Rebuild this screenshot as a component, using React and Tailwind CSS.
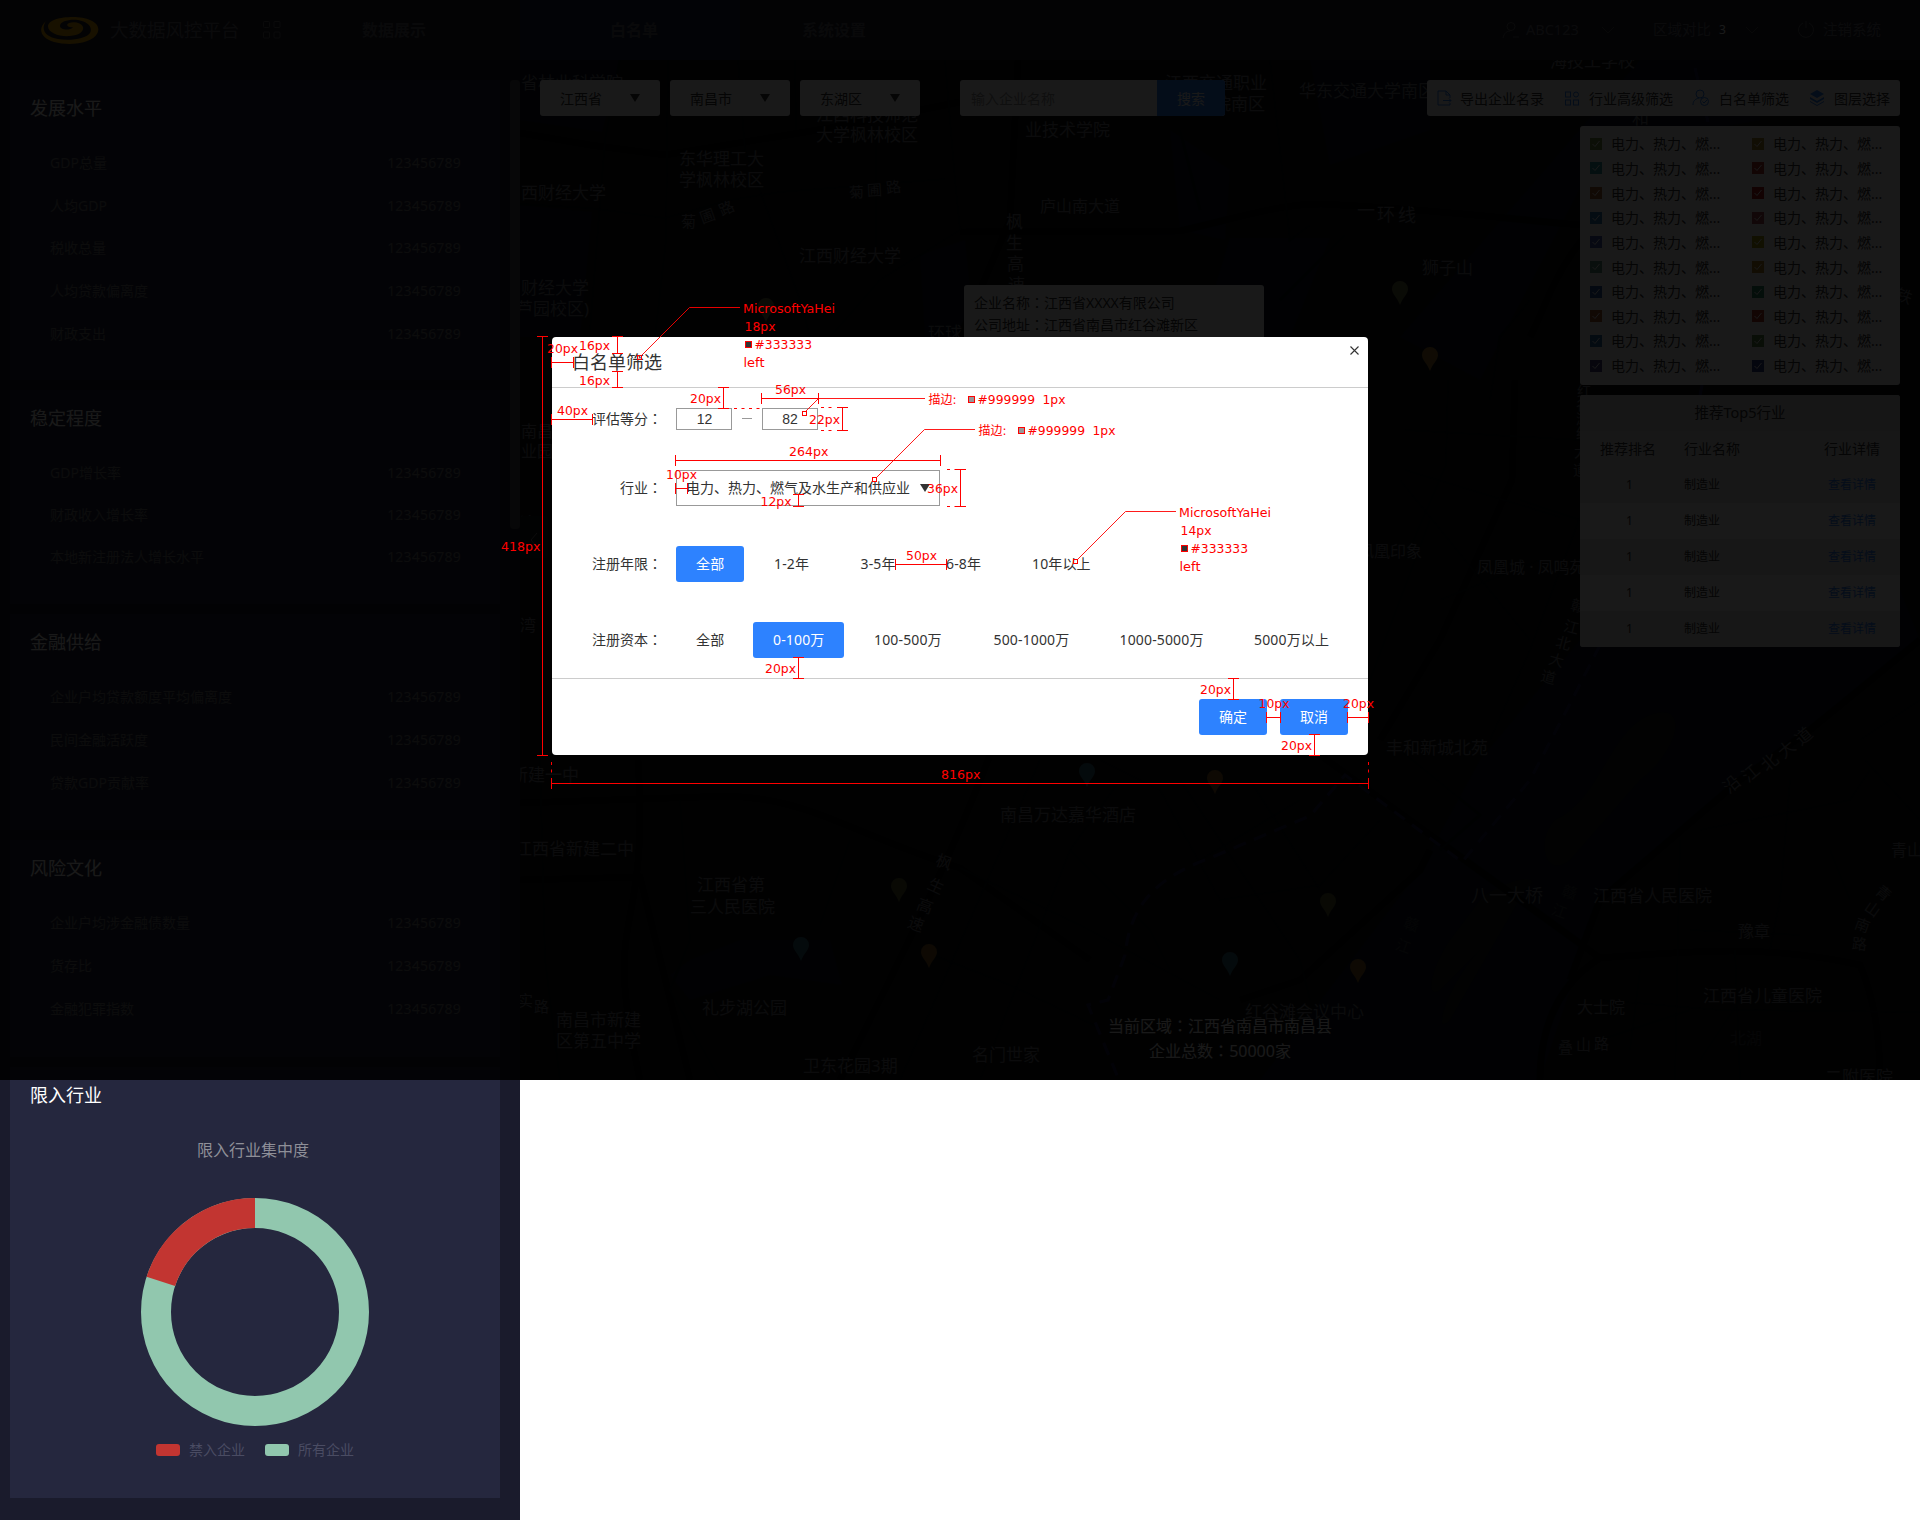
import React from "react";

const PANELS = [
  { title: "发展水平", cls: "h-[300px]", gap: "h-[42.7px]", rows: ["GDP总量", "人均GDP", "税收总量", "人均贷款偏离度", "财政支出"] },
  { title: "稳定程度", cls: "h-[214px]", gap: "h-[42px]", rows: ["GDP增长率", "财政收入增长率", "本地新注册法人增长水平"] },
  { title: "金融供给", cls: "h-[216px]", gap: "h-[43px]", rows: ["企业户均贷款额度平均偏离度", "民间金融活跃度", "贷款GDP贡献率"] },
  { title: "风险文化", cls: "h-[217px]", gap: "h-[43px]", rows: ["企业户均涉金融债数量", "货存比", "金融犯罪指数"] },
];

const LEGEND = [
  "#7f9a4b", "#b08a2e", "#2e9aa0", "#b8322f", "#b0653a", "#b3161b", "#2f78b5", "#b04a50", "#4a62b5", "#a8a012",
  "#5f9a80", "#b8821f", "#2a5aa8", "#2f8a68", "#b05a30", "#b8321f", "#2a70b0", "#5f8a4a", "#4a4088", "#2f3f90",
];

// [text, x, centre y, size, rotation]
const LABELS = [
  ["省林业科学院", 521, 83, 17], ["江西科技师范", 816, 115, 17], ["大学枫林校区", 816, 135, 17],
  ["东华理工大", 679, 159, 17], ["学枫林校区", 679, 180, 17], ["西财经大学", 521, 193, 17],
  ["财经大学", 521, 288, 17], ["芦园校区)", 516, 309, 17], ["江西财经大学", 799, 256, 17],
  ["菊", 681, 221, 15, 0], ["圃", 700, 216, 15, -20], ["路", 719, 208, 15, -25],
  ["菊", 849, 192, 15, -3], ["圃", 867, 190, 15, -3], ["路", 886, 187, 15, -8],
  ["环球", 928, 333, 17], ["庐山南大道", 1040, 206, 16],
  ["枫", 1006, 222, 17], ["生", 1006, 243, 17], ["高", 1007, 264, 17], ["速", 1008, 285, 17],
  ["江西交通职业", 1165, 83, 17], ["业技术学院", 1025, 130, 17], ["学院南区", 1197, 104, 17],
  ["华东交通大学南区", 1299, 91, 17], ["海技工学校", 1550, 61, 17], ["一", 1357, 210, 18],
  ["环", 1377, 214, 18], ["线", 1398, 215, 18], ["狮子山", 1422, 268, 17], ["和", 1632, 118, 17],
  ["南昌", 521, 431, 16], ["业园", 521, 451, 16], ["湾", 520, 523, 16], ["湾", 520, 625, 16],
  ["新建一中", 511, 775, 17], ["江西省新建二中", 515, 849, 17], ["江西省第", 697, 885, 17],
  ["三人民医院", 690, 907, 17], ["礼步湖公园", 702, 1008, 17], ["南昌市新建", 556, 1020, 17],
  ["区第五中学", 556, 1041, 17], ["实", 518, 1000, 15], ["路", 534, 1006, 15], ["卫东花园3期", 803, 1066, 17],
  ["名门世家", 972, 1055, 17], ["南昌万达嘉华酒店", 1000, 815, 17],
  ["枫", 936, 862, 16, 20], ["生", 928, 886, 16, 25], ["高", 917, 906, 16, 20], ["速", 908, 924, 16, 20],
  ["丰和新城北苑", 1386, 748, 17],
  ["沿", 1723, 784, 17, -40], ["江", 1742, 773, 17, -40], ["北", 1761, 762, 17, -40], ["大", 1778, 749, 17, -40], ["道", 1795, 736, 17, -40],
  ["青山", 1891, 850, 16], ["八一大桥", 1471, 895, 18], ["江西省人民医院", 1593, 896, 17], ["豫章", 1738, 931, 16],
  ["青", 1876, 893, 15, 40], ["山", 1865, 909, 15, 35], ["南", 1855, 925, 15, 20], ["路", 1852, 944, 15, 5],
  ["江西省儿童医院", 1703, 996, 17], ["大士院", 1577, 1007, 16], ["叠", 1558, 1047, 15], ["山", 1576, 1044, 15], ["路", 1594, 1043, 15],
  ["二附医院", 1825, 1077, 17], ["红谷滩会议中心", 1245, 1012, 17],
  ["凤凰印象", 1358, 551, 16], ["凤凰城 · 凤鸣苑", 1477, 567, 16],
  ["赣", 1571, 606, 15, 15], ["江", 1564, 627, 15, 15], ["北", 1556, 643, 15, 15], ["大", 1549, 660, 15, 15], ["道", 1541, 677, 15, 15],
  ["红", 1577, 391, 14], ["谷", 1576, 405, 14], ["滩", 1576, 419, 14], ["红", 1576, 433, 14], ["大", 1574, 452, 14], ["道", 1573, 470, 14],
  ["铁", 1896, 296, 16, 20],
];

const WATER_LABELS = [
  ["赣", 1404, 924, 15, 20], ["江", 1396, 946, 15, 20], ["赣", 1562, 892, 15, 20], ["江", 1552, 911, 15, 20], ["北湖", 1730, 1038, 16],
];

const PINS = [
  [766, 298, "#6b7340"], [1400, 281, "#6b7340"], [1430, 347, "#a0752a"], [1087, 763, "#31697a"], [1215, 770, "#8a6022"],
  [899, 878, "#59602e"], [801, 937, "#31697a"], [929, 944, "#8a6022"], [1328, 893, "#59602e"], [1230, 952, "#31697a"], [1358, 959, "#8a6022"],
];

const ROADS_WIDE = [
  "M1018 60L1010 220L960 337", "M960 232L1180 231C1250 215 1290 200 1340 205C1440 210 1520 220 1580 225",
  "M520 133L590 145L665 155L830 128L960 102", "M640 1080C600 900 650 950 638 760", "M520 803L700 797C800 790 840 830 960 868L1090 960",
  "M990 755C950 860 900 960 840 1080", "M520 880L640 877L690 1080", "M1320 755L1600 958C1700 950 1770 945 1860 965C1875 1000 1880 1040 1880 1080",
  "M1600 958C1550 990 1540 1040 1540 1080", "M1920 640L1810 730L1740 780L1600 900L1570 980", "M1515 380L1512 480L1440 640L1380 740",
  "M1240 1000L1300 980L1420 870L1430 850", "M1640 190C1560 240 1550 300 1530 337",
];
const ROADS_THIN = [
  "M620 60L605 140L590 330", "M668 60L666 240L655 337", "M738 60L745 150L800 300L810 337", "M795 60L796 130", "M520 204L590 208L665 218L730 200L780 192L945 179",
  "M876 140L876 270", "M945 60L955 180L960 230", "M830 337L880 280L960 230", "M1270 60L1290 240L1310 225", "M1180 130L1200 210",
  "M540 760L545 960L560 1080", "M680 800L690 940L670 990L720 1080", "M850 840L820 925", "M1040 760L900 1080", "M1120 780L1070 850L980 1080",
  "M960 868L1080 925L1220 1000", "M920 950L1010 985L1100 1028", "M1070 850L1150 930L1170 970", "M1180 780L1300 960L1310 1000",
  "M1200 860L1300 800", "M1250 780L1320 890", "M1100 760L1160 790L1220 900L1320 885L1380 820", "M1400 750L1480 815L1440 850",
  "M1405 470L1560 517", "M1405 430L1580 440", "M1430 520L1370 680", "M1400 480L1530 640", "M1520 500L1580 520", "M1440 600L1540 560",
  "M1448 380L1446 465L1405 560", "M1580 517L1530 650L1490 740", "M1790 780L1780 900L1770 950", "M1700 830L1850 800L1870 770", "M1690 930L1800 935",
  "M1600 1000L1720 1010L1920 1012", "M1680 840L1675 1080", "M1735 950L1740 1080", "M1830 850L1850 900", "M1530 300L1500 337L1490 400", "M1280 300L1345 235",
  "M1600 1040L1690 1010", "M1640 970L1630 1050", "M1740 1000L1700 1060", "M1865 760L1920 820", "M1860 740L1920 700",
];

const mapText = ([t, x, y, s, r], i) => (
  <text key={i} x={x} y={y + s * 0.37} fontSize={s} transform={r ? `rotate(${r} ${x + s / 2} ${y})` : undefined}>{t}</text>
);

function MapCanvas() {
  return (
    <svg className="absolute left-0 top-0" width="1400" height="1020" viewBox="520 60 1400 1020">
      <rect x="520" y="60" width="1400" height="1020" fill="#111112" />
      <g fill="#0a1120">
        <path d="M520 60H620L602 132L520 120Z" />
        <path d="M520 205L592 212L580 337H520Z" />
        <path d="M920 255L965 240L975 337H925Z" />
        <path d="M1170 130L1230 170L1225 240L1180 230Z" />
        <path d="M1310 60H1430V130L1330 165Z" />
        <path d="M1230 238H1330L1290 337H1200Z" />
        <path d="M1640 60H1760V120L1600 150L1480 380L1400 337Z" />
        <path d="M1580 640L1900 590L1920 640L1740 780L1600 900L1540 1080H1260L1420 870L1480 760Z" />
        <path d="M690 960L740 940L830 940L842 985L770 975L690 1000L670 975Z" />
      </g>
      <g fill="#141618">
        <path d="M1650 715C1690 700 1680 750 1640 780L1570 860C1545 880 1535 840 1555 820C1600 800 1610 730 1650 715Z" />
        <path d="M1480 900C1500 880 1550 870 1525 890L1450 1020C1430 1040 1450 980 1480 950L1440 990C1425 1000 1430 970 1450 940Z" />
      </g>
      <g fill="none" stroke="#050506" strokeWidth="7">
        {ROADS_WIDE.map((d) => <path key={d} d={d} />)}
      </g>
      <g fill="none" stroke="#090a0c" strokeWidth="2.5">
        {ROADS_THIN.map((d) => <path key={d} d={d} />)}
      </g>
      <g fill="none" stroke="#1c184e" strokeWidth="3" strokeDasharray="13 9">
        <path d="M1695 68L1708 122" />
        <path d="M1702 385L1690 450" />
        <path d="M1600 645L1572 700L1530 780L1462 862L1345 775L1310 816L1210 858C1150 880 1130 910 1125 955L1108 1000L1088 1005L1119 1080" />
      </g>
      <g fill="#6e7078" fontFamily="Noto Sans, Noto Sans CJK SC, sans-serif">{LABELS.map(mapText)}</g>
      <g fill="#33363e" fontFamily="Noto Sans, Noto Sans CJK SC, sans-serif">{WATER_LABELS.map(mapText)}</g>
      {PINS.map(([x, y, c]) => (
        <path key={`${x}-${y}`} fill={c} d={`M${x} ${y + 24}C${x - 3} ${y + 16} ${x - 8} ${y + 13} ${x - 8} ${y + 8}A8 8 0 0 1 ${x + 8} ${y + 8}C${x + 8} ${y + 13} ${x + 3} ${y + 16} ${x} ${y + 24}Z`} />
      ))}
      <rect x="520" y="516" width="28" height="42" rx="3" fill="#0f1715" />
      <path d="M537 533L531 540L537 547" fill="none" stroke="#777" />
    </svg>
  );
}

const Chevron = () => (
  <svg width="14" height="8" viewBox="0 0 14 8" fill="none" stroke="#555"><path d="M1 1L7 7L13 1" /></svg>
);

function Header() {
  return (
    <header className="relative flex h-[60px] w-full items-center bg-[#1e1f30] text-[#6c6c74]">
      <svg className="ml-[40px] mt-px" width="60" height="28" viewBox="0 0 60 28">
        <path fill="#f0a800" d="M6 4C-3 12 1 21 14 25C29 29 52 27 57.5 16C62 6 48 0 33 0C20 0 8 3 8 9.5C8 16 20 20 30 19C40 18 44 14 43 10C42 6 34 4 29 6C25 8 28 11 33 10C30 14 20 13 20 9C20 4 30 2 38 3C48 5 53 10 50 16C46 22 30 24 18 22C6 20 0 13 6 4Z" />
      </svg>
      <span className="ml-[10px] w-[152px] text-[18.5px] leading-none">大数据风控平台</span>
      <svg width="20" height="20" viewBox="0 0 20 20" fill="none" stroke="#666">
        <rect x="1.5" y="1.5" width="6" height="6" rx="1" /><rect x="12" y="1.5" width="6" height="6" rx="1" />
        <rect x="1.5" y="12" width="6" height="6" rx="1" /><rect x="12" y="12" width="6" height="6" rx="1" />
      </svg>
      <nav className="flex h-full items-center text-center text-[16px] font-bold text-[#5c5d66]">
        <span className="ml-[12px] w-[200px]">数据展示</span>
        <span className="ml-[26px] flex h-full w-[220px] items-center justify-center bg-[#1b2340]"><span className="pl-[8px]">白名单</span></span>
        <span className="w-[188px]">系统设置</span>
      </nav>
      <div className="absolute right-[39px] flex h-full items-center text-[14.5px]">
        <svg width="18" height="18" viewBox="0 0 18 18" fill="none" stroke="#666"><circle cx="9" cy="5.5" r="4" /><path d="M1 17C2 12 5 10 8 10M11 16H17" /></svg>
        <span className="ml-[6px] w-[75px]">ABC123</span>
        <Chevron />
        <span className="ml-[38px] w-[66px]">区域对比</span>
        <span className="w-[26px] text-[12px] text-white">3</span>
        <Chevron />
        <svg className="ml-[38px]" width="18" height="18" viewBox="0 0 18 18" fill="none" stroke="#666"><path d="M6 2A7.5 7.5 0 1 0 12 2M9 0V7" /></svg>
        <span className="ml-[8px]">注销系统</span>
      </div>
    </header>
  );
}

function Sidebar() {
  return (
    <aside className="relative flex h-[1460px] w-[520px] shrink-0 flex-col gap-[10px] bg-[#1a1b2c] pl-[10px] pt-[20px]">
      {PANELS.map((p) => (
        <section key={p.title} className={`${p.cls} w-[490px] shrink-0 bg-[#25273e]`}>
          <h2 className="flex h-[56px] items-center pl-[20px] text-[18px] text-white">{p.title}</h2>
          <div className="pl-[40px] pr-[39px] pt-[5px] text-[14px] text-[#77787f]">
            {p.rows.map((r) => (
              <div key={r} className={`${p.gap} flex items-center justify-between`}>
                <span>{r}</span><span className="tracking-[0.2px]">123456789</span>
              </div>
            ))}
          </div>
        </section>
      ))}
      <section className="flex h-[431px] w-[490px] shrink-0 flex-col bg-[#25273e]">
        <h2 className="flex h-[56px] items-center pl-[20px] text-[18px] text-white">限入行业</h2>
        <h3 className="mt-[14px] h-[26px] pr-[4px] text-center text-[16px] leading-[26px] text-[#8e8f98]">限入行业集中度</h3>
        <svg className="ml-[130px] mt-[34px] shrink-0" width="230" height="230" viewBox="-115 -115 230 230">
          <circle r="99" fill="none" stroke="#91c7ae" strokeWidth="30" />
          <path d="M0 -99A99 99 0 0 0 -94.15 -30.6" fill="none" stroke="#c23531" strokeWidth="30" />
        </svg>
        <div className="ml-[146px] mt-[13px] flex items-center text-[14px] leading-[20px] text-[#4a4c63]">
          <i className="mr-[9px] h-[12px] w-[24px] rounded-[3px] bg-[#c23531]" /><span>禁入企业</span>
          <i className="ml-[20px] mr-[9px] h-[12px] w-[24px] rounded-[3px] bg-[#91c7ae]" /><span>所有企业</span>
        </div>
      </section>
      <div className="absolute right-0 top-[20px] h-[449px] w-[10px] rounded-[4px] bg-[#4a4a50]" />
    </aside>
  );
}

const Caret = () => <svg width="10" height="8" viewBox="0 0 10 8"><path d="M0 0H10L5 8Z" fill="#333" /></svg>;

// Full-width colon, set in the middle of its square.
const Colon = () => <span className="font-['Noto_Sans_CJK_TC'] leading-none" lang="zh-TW">：</span>;

function MapControls() {
  return (
    <>
      <div className="absolute left-[20px] top-[20px] flex gap-[10px] text-[14px] text-[#333]">
        {["江西省", "南昌市", "东湖区"].map((t) => (
          <div key={t} className="flex h-[36px] w-[120px] items-center justify-between rounded-[3px] bg-white px-[20px]">{t}<Caret /></div>
        ))}
        <div className="ml-[30px] flex h-[36px] w-[265px] overflow-hidden rounded-[3px] bg-white">
          <span className="flex w-[197px] items-center pl-[11px] text-[#999]">输入企业名称</span>
          <span className="flex w-[68px] items-center justify-center bg-[#2d82ff] text-white">搜索</span>
        </div>
      </div>
      <div className="absolute right-[20px] top-[20px] flex h-[36px] w-[473px] items-center rounded-[3px] bg-white pl-[9px] text-[14px] text-[#333]">
        <svg width="16" height="16" viewBox="0 0 16 16" fill="none" stroke="#2d82ff"><path d="M14 8V5L10 1H2V15H14V13M10 1V5H14M7 10.5H15M13 8.5L15 10.5L13 12.5" /></svg>
        <span className="ml-[8px] w-[104px]">导出企业名录</span>
        <svg width="16" height="16" viewBox="0 0 16 16" fill="none" stroke="#2d82ff"><rect x="1.5" y="2" width="5" height="5" /><circle cx="12" cy="4.5" r="2.5" /><rect x="1.5" y="10" width="5" height="5" /><rect x="9.5" y="10" width="5" height="5" /></svg>
        <span className="ml-[9px] w-[103px]">行业高级筛选</span>
        <svg width="18" height="18" viewBox="0 0 18 18" fill="none" stroke="#2d82ff"><circle cx="8" cy="5" r="4" /><path d="M1 16C1 12 3 10 7 9" /><circle cx="12.5" cy="12.5" r="4" /><path d="M10.5 12.5L12 14L15 11" /></svg>
        <span className="ml-[9px] w-[90px]">白名单筛选</span>
        <svg width="16" height="16" viewBox="0 0 16 16" fill="#2d82ff"><path d="M8 0L15 4L8 8L1 4ZM1 7L8 11L15 7V9L8 13L1 9ZM1 11L8 15L15 11V12L8 16L1 12Z" /></svg>
        <span className="ml-[9px]">图层选择</span>
      </div>
      <div className="absolute right-[20px] top-[66px] grid h-[259px] w-[320px] grid-cols-[162px_1fr] content-start rounded-[3px] bg-white pl-[10px] pt-[5.5px] text-[14px] text-[#333]">
        {LEGEND.map((c, i) => (
          <div key={i} className="flex h-[24.65px] items-center">
            <span className="mr-[9px] flex size-[12px] items-center justify-center" style={{ backgroundColor: c }}>
              <svg width="10" height="10" viewBox="0 0 10 10" fill="none" stroke="#fff"><path d="M1.5 5L4 7.5L8.5 2" /></svg>
            </span>
            <span>电力、热力、燃...</span>
          </div>
        ))}
      </div>
      <div className="absolute right-[20px] top-[335px] w-[320px] overflow-hidden rounded-[3px] bg-[#f2f2f2] text-[#333]">
        <div className="flex h-[36px] items-center justify-center bg-[#dedede] text-[14.5px]">推荐Top5行业</div>
        <div className="grid h-[36px] grid-cols-[84px_1fr_56px] items-center bg-[#ececec] pb-px pl-[20px] pr-[20px] text-[14px]">
          <span>推荐排名</span><span>行业名称</span><span className="whitespace-nowrap">行业详情</span>
        </div>
        {[0, 1, 2, 3, 4].map((i) => (
          <div key={i} className={`${i % 2 ? "bg-[#fafafa]" : "bg-[#e6e6e6]"} grid h-[36px] grid-cols-[84px_1fr_53px] items-center pl-[20px] pr-[19px] text-[12px]`}>
            <span className="pl-[26px]">1</span><span>制造业</span><span className="text-[#2d82ff]">查看详情</span>
          </div>
        ))}
      </div>
      <div className="absolute left-[444px] top-[225px] h-[150px] w-[300px] rounded-[3px] bg-white pl-[10px] pt-[7px] text-[14px] leading-[22px] text-[#333]">
        <p>企业名称<Colon />江西省XXXX有限公司</p>
        <p>公司地址<Colon />江西省南昌市红谷滩新区</p>
      </div>
      <div className="absolute left-[588px] top-[954px] w-[224px] whitespace-nowrap text-center text-[16px] leading-[25px] text-white">
        <p>当前区域<Colon />江西省南昌市南昌县</p>
        <p>企业总数<Colon />50000家</p>
      </div>
    </>
  );
}

function Options({ items, active }) {
  return (
    <div className="flex gap-[10px]">
      {items.map(([t, w], i) => (
        <span key={t} style={{ width: w }} className={`${i === active ? "rounded-[3px] bg-[#2d82ff] text-white" : ""} flex h-[36px] items-center whitespace-nowrap pl-[20px] tracking-[0.15px]`}>{t}</span>
      ))}
    </div>
  );
}

const Label = ({ children }) => <span className="w-[124px] shrink-0 pr-[14px] text-right">{children}<Colon /></span>;

function Dialog() {
  return (
    <div className="absolute left-[552px] top-[337px] flex h-[418px] w-[816px] flex-col rounded-[4px] bg-white text-[14px] leading-[20px] text-[#333]">
      <div className="flex h-[51px] shrink-0 items-center justify-between border-b border-[#ccc] pl-[20px] pr-[9px] text-[18px]">
        <span>白名单筛选</span>
        <svg className="mb-[23px]" width="9" height="9" viewBox="0 0 9 9" stroke="#333" strokeWidth="1.1"><path d="M0.5 0.5L8.5 8.5M8.5 0.5L0.5 8.5" /></svg>
      </div>
      <div className="flex h-[290px] flex-col pt-[20px]">
        <div className="flex h-[22px] items-center">
          <Label>评估等分</Label>
          <span className="flex h-[22px] w-[56px] items-center justify-center border border-[#999] pl-px font-['Liberation_Sans']">12</span>
          <i className="mx-[10px] mb-[2px] h-px w-[10px] bg-[#999]" />
          <span className="flex h-[22px] w-[56px] items-center justify-center border border-[#999] font-['Liberation_Sans']">82</span>
        </div>
        <div className="mt-[40px] flex h-[36px] items-center">
          <Label>行业</Label>
          <span className="flex h-[36px] w-[264px] items-center justify-between whitespace-nowrap border border-[#999] pl-[9px] pr-[9px]">电力、热力、燃气及水生产和供应业<Caret /></span>
        </div>
        <div className="mt-[40px] flex h-[36px] items-center">
          <Label>注册年限</Label>
          <Options active={0} items={[["全部", 68], ["1-2年", 76.5], ["3-5年", 75.5], ["6-8年", 76], ["10年以上", 110]]} />
        </div>
        <div className="mt-[40px] flex h-[36px] items-center">
          <Label>注册资本</Label>
          <Options active={1} items={[["全部", 67], ["0-100万", 91], ["100-500万", 109.5], ["500-1000万", 116], ["1000-5000万", 124.5], ["5000万以上", 114]]} />
        </div>
      </div>
      <div className="mt-auto flex h-[77px] shrink-0 gap-[13px] border-t border-[#ccc] pl-[647px] pt-[20px] text-white">
        <span className="flex h-[36px] w-[68px] items-center justify-center rounded-[3px] bg-[#2d82ff]">确定</span>
        <span className="flex h-[36px] w-[68px] items-center justify-center rounded-[3px] bg-[#2d82ff]">取消</span>
      </div>
    </div>
  );
}

// Dimension lines: vertical [x, y1, y2], horizontal [y, x1, x2]
const V_DIMS = [
  [542, 336, 755], [617, 336, 353], [617, 371, 387], [723, 387, 408], [842, 407, 430], [798, 494, 506],
  [960, 469, 506], [798, 657, 678], [1233, 678, 699], [1314, 734, 755],
];
const H_DIMS = [
  [362, 551, 573], [398, 761, 818], [460, 675, 940], [488, 675, 687], [419, 551, 592], [564, 895, 946],
  [717, 1266, 1280], [717, 1347, 1368], [783, 551, 1368],
];
const DASHES = ["M734 408.5H761", "M821 407.5H835", "M821 430.5H835", "M947 469.5H955", "M947 506.5H955", "M551.5 762V776", "M1368.5 762V776"];
const LEADERS = ["M740 307.5H689.5L641.5 355.5", "M925 398.5H818.5L806 411", "M975 429.5H924.5L876.5 477.5", "M1176 511.5H1125.5L1077.5 559.5"];
const ENDS = [[637, 355], [802, 411], [872, 477], [1073, 559]];
const SWATCHES = [[745, 341, "#333"], [968, 396, "#999"], [1018, 427, "#999"], [1181, 545, "#333"]];
// [text, x, baseline, drawn width]
const NOTES = [
  ["418px", 501, 551, 39.5], ["16px", 579, 350, 31], ["16px", 579, 385, 31], ["20px", 547, 353, 31],
  ["MicrosoftYaHei", 743, 313, 92], ["18px", 744.5, 331, 31], ["#333333", 754.5, 349, 57.5], ["left", 743.5, 367, 21],
  ["20px", 690, 403, 31], ["56px", 775, 394, 31], ["#999999", 977.5, 404, 57.5], ["1px", 1042.5, 404, 23],
  ["22px", 809, 424, 31], ["264px", 789, 456, 39.5], ["#999999", 1027.5, 435, 57.5], ["1px", 1092.5, 435, 23],
  ["10px", 666, 479, 31], ["12px", 760.5, 506, 31], ["36px", 927, 493, 31], ["40px", 557, 415, 31], ["50px", 906, 560, 31],
  ["MicrosoftYaHei", 1179, 517, 92], ["14px", 1180.5, 535, 31], ["#333333", 1190.5, 553, 57.5], ["left", 1179.5, 571, 21],
  ["20px", 765, 673, 31], ["20px", 1200, 694, 31], ["10px", 1258.5, 708, 31], ["20px", 1343, 708, 31], ["20px", 1281, 750, 31], ["816px", 941, 779, 39.5],
];

function Annotations() {
  return (
    <svg className="absolute left-0 top-0" width="1920" height="1080" viewBox="0 0 1920 1080">
      <g fill="none" stroke="#f00">
        {V_DIMS.map(([x, a, b], i) => <path key={i} d={`M${x + 0.5} ${a}V${b + 1}M${x - 5} ${a + 0.5}H${x + 6}M${x - 5} ${b + 0.5}H${x + 6}`} />)}
        {H_DIMS.map(([y, a, b], i) => <path key={i} d={`M${a} ${y + 0.5}H${b + 1}M${a + 0.5} ${y - 5}V${y + 6}M${b + 0.5} ${y - 5}V${y + 6}`} />)}
        {DASHES.map((d) => <path key={d} d={d} strokeDasharray="3 4.5" />)}
        {LEADERS.map((d) => <path key={d} d={d} strokeWidth="0.9" />)}
        {ENDS.map(([x, y]) => <rect key={x} x={x + 0.5} y={y + 0.5} width="4" height="4" />)}
        {SWATCHES.map(([x, y, c]) => <rect key={x} x={x + 0.5} y={y + 0.5} width="6" height="6" fill={c} />)}
      </g>
      <g fill="#f00" fontSize="12.6" fontFamily="DejaVu Sans, Noto Sans CJK SC, sans-serif">
        {NOTES.map(([t, x, y, w], i) => <text key={i} x={x} y={y} textLength={w} lengthAdjust="spacingAndGlyphs">{t}</text>)}
        <text x="928.5" y="404" fontSize="12">描边:</text>
        <text x="978.5" y="435" fontSize="12">描边:</text>
      </g>
    </svg>
  );
}

export default function App() {
  return (
    <div className="relative h-[1520px] w-[1920px] overflow-hidden bg-white font-['Noto_Sans','Noto_Sans_CJK_SC',sans-serif]">
      <Header />
      <div className="flex">
        <Sidebar />
        <main className="relative h-[1020px] w-[1400px] overflow-hidden">
          <MapCanvas />
          <MapControls />
        </main>
      </div>
      <div className="absolute inset-x-0 top-0 h-[1080px] bg-black/90" />
      <Dialog />
      <Annotations />
    </div>
  );
}
